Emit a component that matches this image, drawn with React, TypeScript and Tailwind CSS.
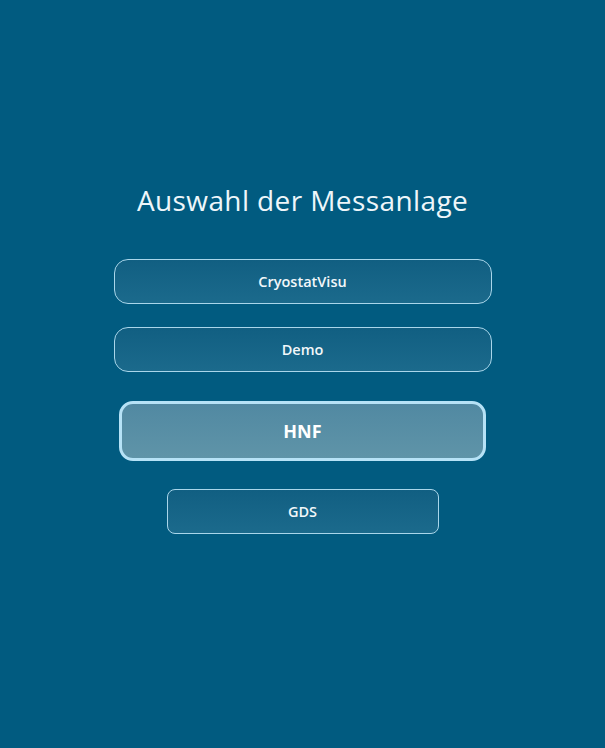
const systems = [
  { label: "CryostatVisu", kind: "wide" },
  { label: "Demo", kind: "wide" },
  { label: "HNF", kind: "active" },
  { label: "GDS", kind: "narrow" },
];

export default function App() {
  return (
    <div
      className="min-h-screen w-full bg-[#015b80] flex flex-col items-center pt-[180px]"
      style={{ fontFamily: '"Open Sans", "Noto Sans", sans-serif' }}
    >
      <h1 className="text-[28px] leading-[40px] text-[#eef6fa] tracking-[0.4px] mb-[39px]">
        Auswahl der Messanlage
      </h1>
      <div className="flex flex-col items-center">
        {systems.map((s) => {
          if (s.kind === "active") {
            return (
              <button
                key={s.label}
                className="w-[367px] h-[60px] mt-[6px] mb-[28px] rounded-[14px] border-[3px] border-[#b6e2f6] bg-gradient-to-b from-[#5189a2] to-[#5f94a8] text-white text-[18px] font-bold"
              >
                {s.label}
              </button>
            );
          }
          return (
            <button
              key={s.label}
              className={`h-[45px] border border-[#a9d6ea] bg-gradient-to-b from-[#115f82] to-[#1b6a8c] text-[#f2f7fa] text-[14.5px] font-semibold ${
                s.kind === "wide" ? "w-[378px] rounded-[14px] mb-[23px]" : "w-[272px] rounded-[8px]"
              }`}
            >
              {s.label}
            </button>
          );
        })}
      </div>
    </div>
  );
}
